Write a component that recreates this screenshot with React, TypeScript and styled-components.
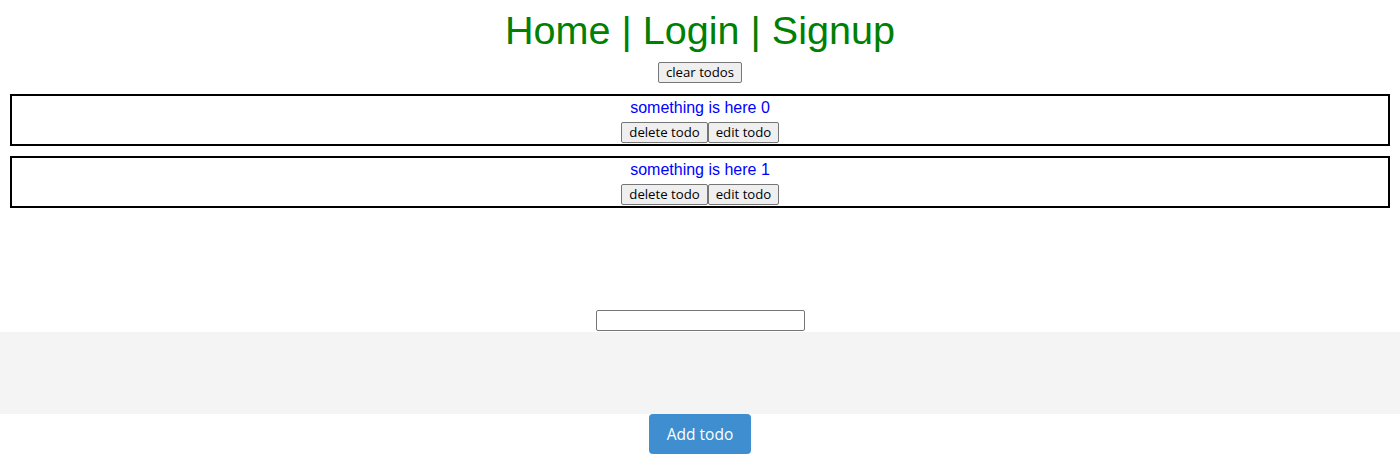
import React from "react";
import styled, { createGlobalStyle } from "styled-components";

const Global = createGlobalStyle`
  html, body { margin: 0; padding: 0; background: #fff; }
  body { font-family: "Liberation Sans", Arial, sans-serif; }
`;

const Page = styled.div`
  display: flex;
  flex-direction: column;
  align-items: center;
  width: 100%;
`;

const Nav = styled.h1`
  margin: 7px 0 0;
  font-family: "Liberation Sans", Arial, sans-serif;
  font-weight: 400;
  font-size: 39.6px;
  line-height: 46px;
  color: #008000;
  text-align: center;
`;

const SysButton = styled.button<{ $w: number }>`
  box-sizing: border-box;
  width: ${(p) => p.$w}px;
  height: 21px;
  padding: 0;
  margin: 0;
  font-family: "Open Sans", "Noto Sans", sans-serif;
  font-size: 13.2px;
  line-height: 1;
  color: #000;
  background: #efefef;
  border: 1px solid #767676;
  border-radius: 2px;
  cursor: pointer;
`;

const ClearWrap = styled.div`
  margin-top: 9px;
  display: flex;
  justify-content: center;
`;

const List = styled.div`
  align-self: stretch;
  margin: 11px 10px 0;
  display: flex;
  flex-direction: column;
  gap: 10px;
`;

const TodoCard = styled.div`
  box-sizing: border-box;
  height: 52px;
  border: 2px solid #000;
  display: flex;
  flex-direction: column;
  align-items: center;
`;

const TodoText = styled.div`
  font-family: "Liberation Sans", Arial, sans-serif;
  font-size: 16px;
  line-height: 18px;
  color: #0000ff;
  margin-top: 3px;
`;

const Actions = styled.div`
  margin-top: 5px;
  display: flex;
`;

const TextInput = styled.input`
  box-sizing: border-box;
  margin-top: 102px;
  width: 209px;
  height: 21px;
  border: 1px solid #767676;
  border-radius: 2px;
  padding: 1px 2px;
  background: #fff;
`;

const Tray = styled.div`
  align-self: stretch;
  margin-top: 1px;
  height: 82px;
  background: #f4f4f4;
`;

const AddButton = styled.button`
  box-sizing: border-box;
  width: 102px;
  height: 40px;
  border: none;
  border-radius: 4px;
  background: #3e8ed0;
  color: #fff;
  font-family: "Open Sans", "Noto Sans", sans-serif;
  font-size: 15.5px;
  padding: 0;
  cursor: pointer;
`;

const todos = ["something is here 0", "something is here 1"];

export default function App() {
  return (
    <>
      <Global />
      <Page>
        <Nav>Home | Login | Signup</Nav>
        <ClearWrap>
          <SysButton $w={84}>clear todos</SysButton>
        </ClearWrap>
        <List>
          {todos.map((t) => (
            <TodoCard key={t}>
              <TodoText>{t}</TodoText>
              <Actions>
                <SysButton $w={87}>delete todo</SysButton>
                <SysButton $w={71}>edit todo</SysButton>
              </Actions>
            </TodoCard>
          ))}
        </List>
        <TextInput type="text" />
        <Tray />
        <AddButton>Add todo</AddButton>
      </Page>
    </>
  );
}
